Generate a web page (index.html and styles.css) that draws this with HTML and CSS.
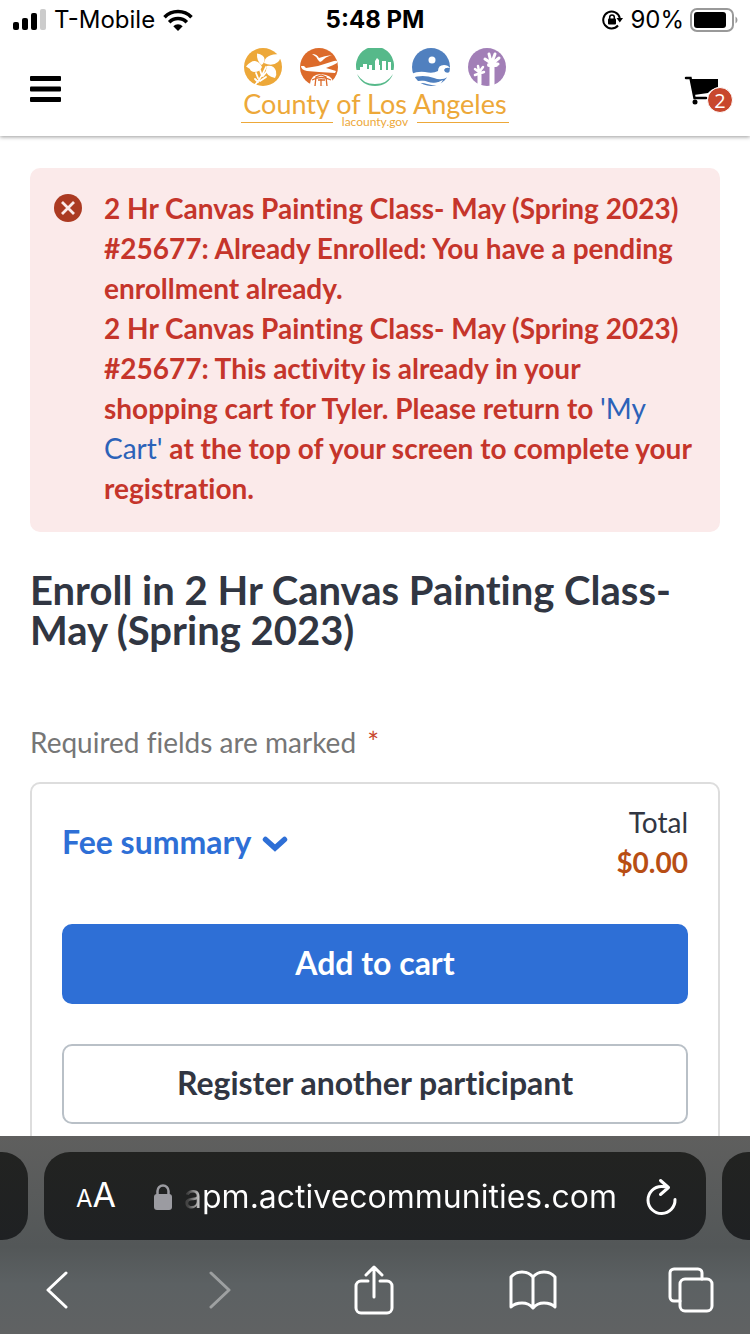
FILE: index.html
```html
<!DOCTYPE html>
<html lang="en">
<head>
<meta charset="utf-8">
<meta name="viewport" content="width=device-width, initial-scale=1">
<title>Enroll in 2 Hr Canvas Painting Class</title>
<link rel="stylesheet" href="styles.css">
</head>
<body>
<div class="status">
  <div class="status-side">
    <svg width="34" height="22" viewBox="0 0 34 22"><rect x="1" y="13" width="6" height="8" rx="2"/><rect x="10" y="9" width="6" height="12" rx="2"/><rect x="19" y="4" width="6" height="17" rx="2"/><rect x="28" y="0" width="6" height="21" rx="2" fill="#ccc"/></svg>
    <span>T-Mobile</span>
    <svg width="30" height="22" viewBox="0 0 30 22" fill="none" stroke="#000" stroke-width="3.6"><path d="M1.500 8.200a19 19 0 0 1 27 0"/><path d="M6.200 13.200a12.400 12.400 0 0 1 17.600 0"/><path d="M10.300 17.300a6.700 6.700 0 0 1 9.400 0L15 22z" fill="#000" stroke="none"/></svg>
  </div>
  <strong class="clock">5:48 PM</strong>
  <div class="status-side status-right">
    <svg width="22" height="20" viewBox="0 0 22 20"><path d="M16 15.500A8.400 8.400 0 1 1 17.800 8" fill="none" stroke="#000" stroke-width="2"/><path d="M14.500 8h6.500l-3.200 4.500z"/><rect x="6" y="8.500" width="8" height="6" rx="1"/><path d="M7.700 9V7.300a2.300 2.300 0 0 1 4.600 0V9" fill="none" stroke="#000" stroke-width="1.500"/></svg>
    <span>90%</span>
    <svg width="48" height="24" viewBox="0 0 48 24"><rect x="1" y="1" width="42" height="22" rx="6" fill="none" stroke="#999" stroke-width="2"/><rect x="4" y="4" width="32" height="16" rx="3"/><path d="M45.500 8.500v7q2-1 2-3.500t-2-3.500" fill="#999"/></svg>
  </div>
</div>
<header class="header">
  <button class="menu" aria-label="Menu"><svg width="31" height="26" viewBox="0 0 31 26"><rect width="31" height="5" rx="1"/><rect y="10.500" width="31" height="5" rx="1"/><rect y="21" width="31" height="5" rx="1"/></svg></button>
  <a class="logo" href="#">
    <svg width="262" height="38" viewBox="0 0 262 38">
      <circle cx="19" cy="19" r="19" fill="#eda839"/>
      <g fill="#fff">
        <path d="M13 5.500q7 1 7.500 5.500 0 4-3 6-5-4-4.500-11.500z"/>
        <path d="M20 15q1-9 16-9 1 5-2 8-6 5-14 1z"/>
        <path d="M2 18.500q5-6 9-5.500 5 1 7 6-2 5-8 5-4-1-4-3z"/>
        <path d="M23 18q7-1 9 5 1 4-1 7-9-2-9-8z"/>
      </g>
      <path d="M11 37Q17 30 22 19M12 25l2 5M16 22l2 6M11 31l3 3M23 23l-4 5M22 29l-6 4" fill="none" stroke="#fff" stroke-width="1.800" stroke-linecap="round"/>
      <circle cx="75" cy="19" r="19" fill="#dc6b2b"/>
      <g fill="#fff">
        <path d="M68 6q5 0 7 4 5-2 13-3-7 2-10 6l-2 1-2-2q-2-4-6-6z"/>
        <path d="M57 18h3l2 2 12-2 16-5q4-1 3 2-3 2-11 5l10 3-1 2-16-1-12-1q-6-1-6-5z"/>
        <path d="M66 36q1-10 11-10 11 1 12 8-5 4-14 4-6 0-9-2z"/>
      </g>
      <path d="M68 32q9-5 19 0M71 38l1-9 5-2 5 2 1 9M77 31v7M74 32h7" fill="none" stroke="#dc6b2b" stroke-width="1.300"/>
      <path d="M112.500 22A19 19 0 1 1 149.500 22H147V14h-3v8h-2V13h-4v9h-2v-5h-1v-5l-2-2-2 3v9h-3v-5h-3v4h-2v-5h-4v3h-3v3z" fill="#56b98a"/>
      <path d="M113 26q6 10 18 10t18-10q-5 12-18 12t-18-12z" fill="#56b98a"/>
      <circle cx="187" cy="19" r="19" fill="#5080bf"/>
      <circle cx="188" cy="12" r="3.500" fill="#fff"/>
      <path d="M167 26q7-3 14-2 8 2 13-1 0-6 6-6 4 0 6 3-5-1-6 2 1 4 6 2l-2 5q-7 4-14 1-11-4-23 0z" fill="#fff"/>
      <path d="M171 34q7-3 13-1 8 3 15-1l-3 5q-6 1-13-1-6-2-9 0z" fill="#fff"/>
      <path d="M174 32q5-1 10 1t11 0" fill="none" stroke="#5080bf" stroke-width="1.500"/>
      <circle cx="243" cy="19" r="19" fill="#a27fb7"/>
      <g fill="none" stroke="#fff" stroke-linecap="round">
        <path d="M248 37V19" stroke-width="5"/><path d="M235.500 36V27" stroke-width="4"/>
        <path d="M247 15l-6-4M247 14l-2-8M248 14l3-8M249 15l6-5M249 16l5 0" stroke-width="3"/>
        <path d="M245 17h7" stroke-width="4"/>
        <path d="M235 24l-4-3M235 23l-1-5M236 23l3-4M237 25l3-1M234 26l-3 1" stroke-width="2.500"/>
      </g>
    </svg>
    <span class="logo-name">County of Los Angeles</span>
    <span class="logo-site">lacounty.gov</span>
  </a>
  <a class="cart" href="#" aria-label="My Cart, 2 items">
    <svg width="36" height="30" viewBox="0 0 36 30"><path d="M2 2h4.500l4 20H22" fill="none" stroke="#000" stroke-width="2.500" stroke-linecap="round"/><path d="M7 3h27v8q-7 2-10 6l-14 2z"/><circle cx="11" cy="26" r="2.500"/></svg>
    <span class="badge">2</span>
  </a>
</header>
<main class="main">
  <section class="alert" role="alert">
    <svg class="alert-icon" width="28" height="28" viewBox="0 0 28 28"><circle cx="14" cy="14" r="14" fill="#ab3a22"/><path d="M8 8l12 12M20 8L8 20" stroke="#fbeaea" stroke-width="2.800"/></svg>
    <div>
      <p>2 Hr Canvas Painting Class- May (Spring 2023) #25677: Already Enrolled: You have a pending enrollment already.</p>
      <p>2 Hr Canvas Painting Class- May (Spring 2023) #25677: This activity is already in your shopping cart for Tyler. Please return to <a href="#">'My Cart'</a> at the top of your screen to complete your registration.</p>
    </div>
  </section>
  <h1>Enroll in 2 Hr Canvas Painting Class- May (Spring 2023)</h1>
  <p class="required">Required fields are marked <span class="star">*</span></p>
  <section class="card">
    <div class="fees">
      <button class="fee-toggle">Fee summary <svg width="26" height="18" viewBox="0 0 26 18"><path d="M3.500 3.500l9.500 8.500 9.500-8.500" fill="none" stroke="#2e6fd6" stroke-width="5.500" stroke-linecap="round"/></svg></button>
      <dl class="total"><dt>Total</dt><dd>$0.00</dd></dl>
    </div>
    <button class="btn primary">Add to cart</button>
    <button class="btn">Register another participant</button>
  </section>
</main>
<footer class="browser">
  <div class="tabs">
    <div class="tab-edge left"></div>
    <div class="address">
      <button class="reader" aria-label="Page settings"><span class="small-a">A</span>A</button>
      <svg class="lock" width="18" height="26" viewBox="0 0 18 26"><rect y="10" width="18" height="16" rx="3" fill="#9b9ba1"/><path d="M3.500 11V7a5.500 5.500 0 0 1 11 0v4" fill="none" stroke="#9b9ba1" stroke-width="2.500"/></svg>
      <span class="url">apm.activecommunities.com</span>
      <button class="tool" aria-label="Reload"><svg width="32" height="38" viewBox="0 0 32 38"><path d="M29 21.500A13.500 13.500 0 1 1 15.500 8.500q4 0 7 1M14.500 2.500l8 7-8 7"/></svg></button>
    </div>
    <div class="tab-edge right"></div>
  </div>
  <nav class="tools">
    <button class="tool" aria-label="Back"><svg width="48" height="38" viewBox="0 0 48 38"><path d="M33 2L15 19l18 17"/></svg></button>
    <button class="tool forward" aria-label="Forward" disabled><svg width="48" height="38" viewBox="0 0 48 38"><path d="M19 2l18 17-18 17"/></svg></button>
    <button class="tool" aria-label="Share"><svg width="48" height="50" viewBox="0 0 48 50"><path d="M18 16h-7a5 5 0 0 0-5 5v22a5 5 0 0 0 5 5h26a5 5 0 0 0 5-5V21a5 5 0 0 0-5-5h-7M24 32V3M16 10l8-8 8 8"/></svg></button>
    <button class="tool" aria-label="Bookmarks"><svg width="48" height="42" viewBox="0 0 48 42"><path d="M24 8Q20 3 13 3T2 8v30q4-4 11-4t11 5q4-5 11-5t11 4V8q-4-5-11-5T24 8v30"/></svg></button>
    <button class="tool" aria-label="Tabs"><svg width="48" height="46" viewBox="0 0 48 46"><rect x="13" y="12" width="32" height="32" rx="5"/><path d="M13 34H7a4 4 0 0 1-4-4V6a4 4 0 0 1 4-4h24a4 4 0 0 1 4 4v6"/></svg></button>
  </nav>
</footer>
</body>
</html>
```
FILE: styles.css
```css
* { box-sizing: border-box; }
body {
  margin: 0;
  height: 100vh;
  display: flex;
  flex-direction: column;
  overflow: hidden;
  background: #fff;
  color: #313642;
  font-family: Lato, sans-serif;
  font-variant-ligatures: none;
}
p, h1, dl, dd { margin: 0; }
button { padding: 0; border: 0; background: none; color: inherit; font: inherit; }
svg { flex: none; }

/* Device status bar */
.status {
  position: relative;
  z-index: 1;
  flex: none;
  display: flex;
  align-items: center;
  height: 40px;
  padding: 0 12px;
  background: #fff;
  color: #000;
  font: 24px/28px Inter, sans-serif;
}
.status-side { display: flex; flex: 1; align-items: center; gap: 8px; }
.status-right { justify-content: flex-end; gap: 6px; }

/* Site header */
.header {
  flex: none;
  display: grid;
  grid-template-columns: 1fr auto 1fr;
  height: 96px;
  padding: 8px 30px 0;
  box-shadow: 0 1px 4px #0006;
}
.menu { justify-self: start; align-self: start; margin-top: 28px; }
.menu svg { display: block; }
.logo {
  display: grid;
  width: 268px;
  justify-items: center;
  align-content: start;
  color: #eda839;
  text-decoration: none;
}
.logo-name { margin-top: 4px; font-size: 27px; line-height: 28px; white-space: nowrap; }
.logo-site {
  display: flex;
  align-items: center;
  gap: 9px;
  width: 100%;
  font-size: 12px;
  line-height: 8px;
}
.logo-site::before, .logo-site::after { content: ""; flex: 1; height: 1px; background: #eda839; }
.cart { position: relative; justify-self: end; margin-top: 28px; }
.cart svg { display: block; }
.badge {
  position: absolute;
  top: 11px;
  right: -13px;
  width: 26px;
  height: 26px;
  border: 1px solid #fff;
  border-radius: 50%;
  background: #c8472d;
  color: #fff;
  font: 20px/25px "Open Sans", sans-serif;
  text-align: center;
}

/* Page content */
.main { flex: 1; min-height: 0; overflow: hidden; padding: 32px 30px 0; }
.alert {
  display: flex;
  gap: 22px;
  padding: 20px 24px 24px;
  border-radius: 10px;
  background: #fbeaea;
  color: #c5352b;
  font-size: 28px;
  font-weight: 700;
  line-height: 40px;
}
.alert-icon { margin-top: 6px; }
.alert a { color: #2c62b8; font-weight: 400; text-decoration: none; }
h1 { margin-top: 38px; font-size: 40px; line-height: 40px; }
.required { margin-top: 72px; color: #767676; font-size: 28px; line-height: 40px; }
.star { margin-left: 4px; color: #c8472d; }
.card {
  margin-top: 20px;
  padding: 18px 30px 40px;
  border: 2px solid #ddd;
  border-radius: 10px;
}
.fees { display: flex; align-items: center; justify-content: space-between; padding-bottom: 2px; }
.fee-toggle { color: #2e6fd6; font-size: 32px; font-weight: 700; line-height: 40px; }
.fee-toggle svg { margin-left: 4px; }
.total { text-align: right; font-size: 28px; line-height: 40px; }
.total dd { color: #b84e14; font-weight: 700; }
.btn {
  display: block;
  width: 100%;
  height: 80px;
  margin-top: 40px;
  padding-bottom: 4px;
  border: 2px solid #b9c0c7;
  border-radius: 10px;
  font-size: 32px;
  font-weight: 700;
}
.primary { border-color: #2e6fd6; background: #2e6fd6; color: #fff; }

/* Browser toolbar */
.browser {
  flex: none;
  height: 198px;
  padding-top: 16px;
  background: linear-gradient(#5f5f5e, #535758 56%, #5c6163 75%, #606263);
  color: #fff;
}
.tabs { display: flex; gap: 16px; }
.tab-edge, .address { height: 88px; background: linear-gradient(#222321, #1f2123); }
.tab-edge { width: 28px; }
.left { border-radius: 0 26px 26px 0; }
.right { border-radius: 26px 0 0 26px; }
.address {
  flex: 1;
  display: flex;
  align-items: center;
  padding: 2px 28px 0 32px;
  border-radius: 26px;
  font: 32px/40px Inter, sans-serif;
}
.reader { font-size: 34px; }
.small-a { font-size: 24px; }
.lock { margin-left: 38px; }
.url {
  margin: 0 auto 0 12px;
  background: linear-gradient(90deg, #444 4px, #fff 20px);
  background-clip: text;
  color: transparent;
}
.tools { display: flex; align-items: center; justify-content: space-between; padding: 25px 35px 0 33px; }
.tool svg {
  display: block;
  fill: none;
  stroke: #fff;
  stroke-width: 3;
  stroke-linecap: round;
  stroke-linejoin: round;
}
.forward { opacity: .4; }
```
